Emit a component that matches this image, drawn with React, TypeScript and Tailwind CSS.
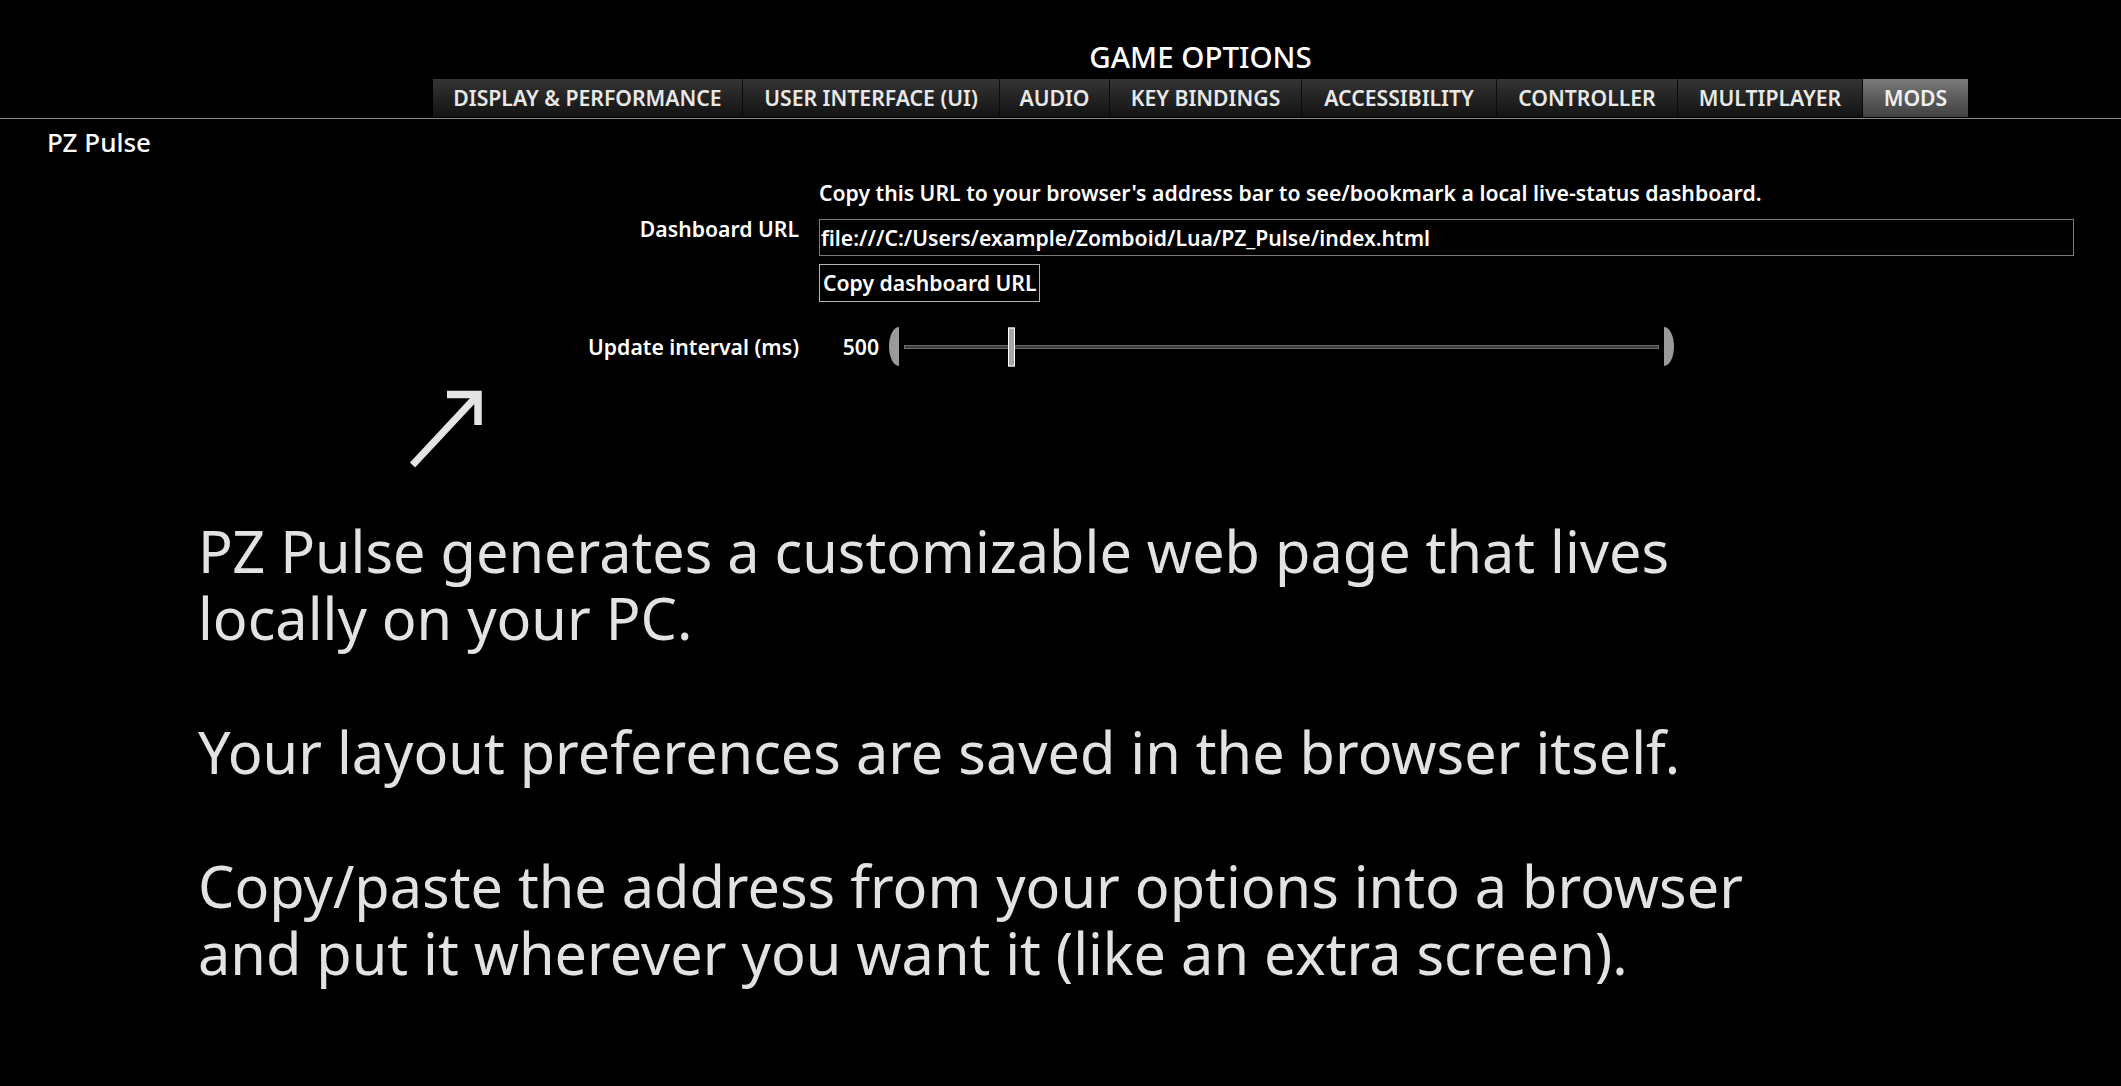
import React from "react";

const tabs = [
  { label: "DISPLAY & PERFORMANCE", w: "w-[310px]", active: false },
  { label: "USER INTERFACE (UI)", w: "w-[257px]", active: false },
  { label: "AUDIO", w: "w-[110px]", active: false },
  { label: "KEY BINDINGS", w: "w-[192px]", active: false },
  { label: "ACCESSIBILITY", w: "w-[195px]", active: false },
  { label: "CONTROLLER", w: "w-[181px]", active: false },
  { label: "MULTIPLAYER", w: "w-[185px]", active: false },
  { label: "MODS", w: "w-[105px]", active: true },
];

export default function App() {
  return (
    <div className="min-h-screen w-full overflow-hidden bg-black font-['Noto_Sans',sans-serif] text-white">
      {/* Header */}
      <div className="ml-[433px] w-[1535px] pt-[37px]">
        <div className="text-center text-[29.5px] font-medium leading-[40px] text-white">GAME OPTIONS</div>
        <div className="mt-[2px] flex h-[38px]">
          {tabs.map((t) => (
            <div
              key={t.label}
              className={
                t.active
                  ? `${t.w} flex h-[38px] items-center justify-center whitespace-nowrap bg-linear-to-b from-[#7a7a7a] via-[#5c5c5c] to-[#414141] text-[21.2px] font-semibold leading-[38px] text-[#f0f0f0]`
                  : `${t.w} flex h-[38px] items-center justify-center whitespace-nowrap border-r border-[#0a0a0a] bg-linear-to-b from-[#343434] via-[#232323] to-[#131313] text-[21.2px] font-semibold leading-[38px] text-[#e8e8e8]`
              }
            >
              {t.label}
            </div>
          ))}
        </div>
      </div>
      <div className="mt-px h-px w-full bg-[#8a8a8a]" />

      {/* Section title */}
      <div className="mt-[5px] pl-[47px] text-[26px] font-medium leading-[36px] text-white">PZ Pulse</div>

      {/* Settings grid */}
      <div className="mt-[18px] grid grid-cols-[799px_1255px] gap-x-[20px] text-[21.2px] font-semibold leading-[29px]">
        <div />
        <div className="whitespace-nowrap text-white">
          Copy this URL to your browser's address bar to see/bookmark a local live-status dashboard.
        </div>

        <div className="mt-[7px] text-right text-white">Dashboard URL</div>
        <div className="mt-[12px] h-[37px] whitespace-nowrap border border-[#7c7c7c] pl-px pt-px leading-[34px] text-white">
          file:///C:/Users/example/Zomboid/Lua/PZ_Pulse/index.html
        </div>

        <div />
        <div className="mt-[8px]">
          <div className="h-[38px] w-fit whitespace-nowrap border border-[#b4b4b4] px-[3px] leading-[36px] text-white">
            Copy dashboard URL
          </div>
        </div>

        <div className="mt-[30px] text-right text-white">Update interval (ms)</div>
        <div className="mt-[25px] flex h-[39px] items-center">
          <div className="w-[60px] text-right text-white">500</div>
          <svg className="ml-[10px] block" width="10" height="39" viewBox="0 0 10 39">
            <path d="M10 0 A10 19.5 0 0 0 10 39 Z" fill="#9a9a9a" />
          </svg>
          <div className="relative ml-[5px] h-[4px] w-[755px] border border-[#6e6e6e] bg-[#3c3c3c]">
            <div className="absolute left-[103px] top-1/2 h-[39px] w-[7px] -translate-y-1/2 border border-white bg-[#a6a6a6]" />
          </div>
          <svg className="ml-[5px] block" width="10" height="39" viewBox="0 0 10 39">
            <path d="M0 0 A10 19.5 0 0 1 0 39 Z" fill="#9a9a9a" />
          </svg>
        </div>
      </div>

      {/* Arrow */}
      <svg className="ml-[405px] mt-[19px] block" width="80" height="85" viewBox="0 0 80 85">
        <path d="M42 9.5 H73 V40" fill="none" stroke="#e4e4e4" strokeWidth="7.5" strokeLinejoin="miter" />
        <path d="M7.5 80 L71 12" fill="none" stroke="#e4e4e4" strokeWidth="7" />
      </svg>

      {/* Big description */}
      <div className="mt-[47px] whitespace-nowrap pl-[198px] text-[57.6px] font-normal leading-[67px] text-[#e2e2e2]">
        PZ Pulse generates a customizable web page that lives
        <br />
        locally on your PC.
        <br />
        <br />
        Your layout preferences are saved in the browser itself.
        <br />
        <br />
        Copy/paste the address from your options into a browser
        <br />
        and put it wherever you want it (like an extra screen).
      </div>
    </div>
  );
}
